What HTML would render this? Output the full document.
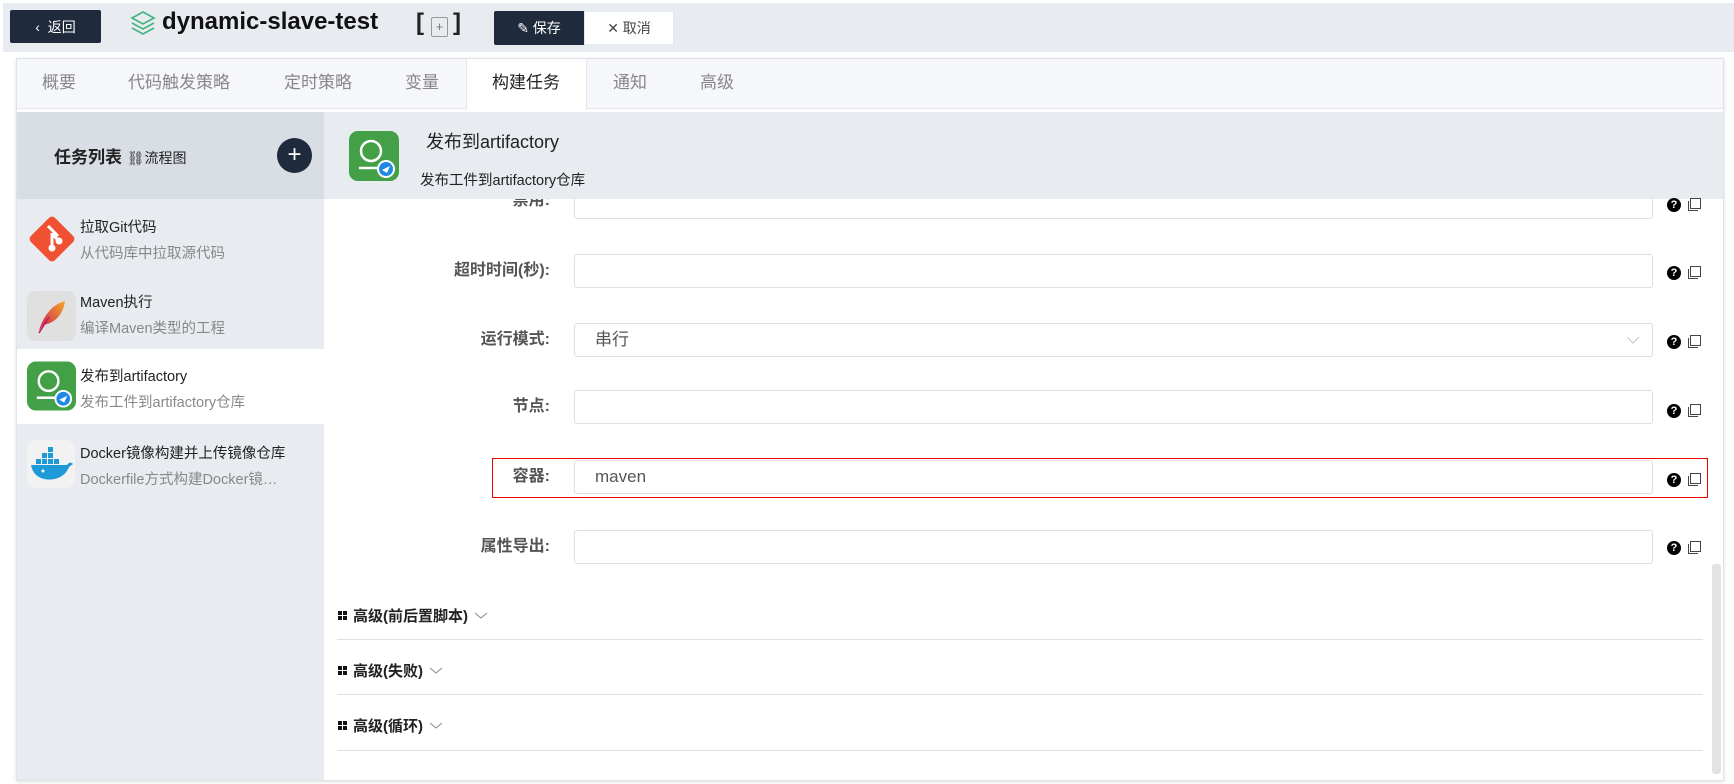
<!DOCTYPE html>
<html><head><meta charset="utf-8"><style>
*{margin:0;padding:0;box-sizing:border-box}
body{width:1734px;height:784px;background:#fff;font-family:"Liberation Sans","Noto Sans CJK SC",sans-serif;position:relative;overflow:hidden;color:#222}
.a{position:absolute}
.hdr{left:3px;top:3px;width:1731px;height:49px;background:#e8ebf0}
.btn{background:#1f2a3c;color:#fff;font-size:14px;display:flex;align-items:center;justify-content:center;border-radius:2px}
.tab{top:58px;height:50px;line-height:50px;font-size:17px;color:#888}
.lbl{width:240px;text-align:right;left:310px;font-size:16px;font-weight:bold;color:#555}
.inp{left:574px;width:1079px;height:34px;border:1px solid #dcdfe6;border-radius:3px;background:#fff;font-size:17px;color:#555;padding-left:20px;line-height:32px}
.help{width:14px;height:14px;border-radius:50%;background:#000;color:#fff;font-size:11px;font-weight:bold;text-align:center;line-height:14px}
.item .t{font-size:14.5px;color:#222}
.item .s{font-size:14.5px;color:#888}
.sec{left:338px;font-size:15px;font-weight:bold;color:#222;display:flex;align-items:center;gap:6px}
.dv{left:337px;width:1366px;height:1px;background:#dcdfe6}
.gr{width:9px;height:9px;display:grid;grid-template-columns:4px 4px;gap:1px}
.gr i{background:#111;display:block}
</style></head><body>
<div class="a hdr"></div>
<div class="a btn" style="left:10px;top:10px;width:91px;height:33px">‹&nbsp; 返回</div>
<svg class="a" style="left:130px;top:10px" width="26" height="28" viewBox="0 0 26 28" fill="none" stroke="#3fb37f" stroke-width="1.6"><path d="M13 2 L24 8 L13 14 L2 8 Z"/><path d="M2 13 L13 19 L24 13"/><path d="M2 18 L13 24 L24 18"/></svg>
<div class="a" style="left:162px;top:8px;font-size:24px;font-weight:bold;color:#111">dynamic-slave-test</div>
<div class="a" style="left:416px;top:9px;font-size:24px;font-weight:bold">[</div>
<div class="a" style="left:431px;top:17px;width:17px;height:20px;border:1px solid #999;border-radius:2px;font-size:13px;color:#777;text-align:center;line-height:18px">+</div>
<div class="a" style="left:453px;top:9px;font-size:24px;font-weight:bold">]</div>
<div class="a btn" style="left:494px;top:11px;width:90px;height:34px;border-radius:2px 0 0 2px">✎ 保存</div>
<div class="a" style="left:584px;top:11px;width:90px;height:34px;background:#fff;border:1px solid #e4e7ed;font-size:14px;color:#444;text-align:center;line-height:32px">✕ 取消</div>

<div class="a" style="left:16px;top:58px;width:1708px;height:723px;border:1px solid #dfe2e8;box-shadow:0 1px 4px rgba(0,0,0,.12);background:#fff"></div>
<div class="a" style="left:17px;top:59px;width:1706px;height:50px;background:#f5f7fa;border-bottom:1px solid #e4e7ed"></div>
<div class="a" style="left:466px;top:59px;width:121px;height:51px;background:#fff;border-left:1px solid #e4e7ed;border-right:1px solid #e4e7ed"></div>
<div class="a tab" style="left:42px">概要</div>
<div class="a tab" style="left:128px">代码触发策略</div>
<div class="a tab" style="left:284px">定时策略</div>
<div class="a tab" style="left:405px">变量</div>
<div class="a tab" style="left:492px;color:#222">构建任务</div>
<div class="a tab" style="left:613px">通知</div>
<div class="a tab" style="left:700px">高级</div>

<div class="a" style="left:17px;top:112px;width:307px;height:668px;background:#e8ebf0"></div>
<div class="a" style="left:17px;top:112px;width:307px;height:87px;background:#d9dde4"></div>
<div class="a" style="left:54px;top:143px;font-size:17px;font-weight:bold">任务列表 <span style="font-size:14px;font-weight:normal">⛓流程图</span></div>
<div class="a" style="left:277px;top:138px;width:35px;height:35px;border-radius:50%;background:#1f2a3c;color:#fff;font-size:24px;text-align:center;line-height:33px">+</div>

<div class="a" style="left:17px;top:349px;width:307px;height:75px;background:#fff"></div>
<div class="a item" style="left:27px;top:208px">
<svg class="a" style="left:0;top:6px" width="50" height="50" viewBox="0 0 50 50"><rect x="8" y="8" width="34" height="34" rx="4" transform="rotate(45 25 25)" fill="#f05133"/><path d="M21 12 L31 22 M25 19 V33 M25 20 L32 27" stroke="#fff" stroke-width="3"/><circle cx="25" cy="34" r="3.5" fill="#fff"/><circle cx="32" cy="27" r="3.5" fill="#fff"/></svg>
<div class="a t" style="left:53px;top:8px;white-space:nowrap">拉取Git代码</div>
<div class="a s" style="left:53px;top:34px;white-space:nowrap">从代码库中拉取源代码</div></div>
<div class="a item" style="left:27px;top:283px">
<svg class="a" style="left:0;top:8px" width="49" height="50" viewBox="0 0 49 50"><defs><linearGradient id="g" x1="0" y1="1" x2="1" y2="0"><stop offset="0" stop-color="#c2185b"/><stop offset="1" stop-color="#f9a825"/></linearGradient></defs><rect width="49" height="50" rx="8" fill="#e0e0e0"/><path d="M12 40 C16 26 24 14 38 10 C36 24 28 32 16 34 Z" fill="url(#g)"/><path d="M12 42 L22 26" stroke="#c2185b" stroke-width="1.5"/></svg>
<div class="a t" style="left:53px;top:8px;white-space:nowrap">Maven执行</div>
<div class="a s" style="left:53px;top:34px;white-space:nowrap">编译Maven类型的工程</div></div>
<div class="a item" style="left:27px;top:357px">
<svg class="a" style="left:0;top:4px" width="49" height="50" viewBox="0 0 50 50"><rect width="50" height="50" rx="9" fill="#43a047"/><circle cx="22" cy="20" r="10" fill="none" stroke="#fff" stroke-width="2.5"/><path d="M10 37 H32" stroke="#fff" stroke-width="2.5"/><circle cx="37" cy="38" r="9" fill="#fff"/><circle cx="37" cy="38" r="7" fill="#1e88e5"/><path d="M33 39 L41 35 L38 42 Z" fill="#fff"/></svg>
<div class="a t" style="left:53px;top:8px;white-space:nowrap">发布到artifactory</div>
<div class="a s" style="left:53px;top:34px;white-space:nowrap">发布工件到artifactory仓库</div></div>
<div class="a item" style="left:27px;top:440px">
<svg class="a" style="left:0;top:0" width="48" height="48" viewBox="0 0 48 48"><rect width="48" height="48" rx="9" fill="#f2f2f2"/><path d="M4 25 H40 C42 22 44 22 46 24 C43 26 42 27 41 29 C36 40 20 42 12 37 C7 34 5 30 4 25 Z" fill="#1e9bd7"/><g fill="#1e9bd7"><rect x="9" y="19" width="5" height="5"/><rect x="15" y="19" width="5" height="5"/><rect x="21" y="19" width="5" height="5"/><rect x="27" y="19" width="5" height="5"/><rect x="15" y="13" width="5" height="5"/><rect x="21" y="13" width="5" height="5"/><rect x="21" y="7" width="5" height="5"/></g><circle cx="16" cy="31" r="1.5" fill="#fff"/></svg>
<div class="a t" style="left:53px;top:2px;white-space:nowrap">Docker镜像构建并上传镜像仓库</div>
<div class="a s" style="left:53px;top:28px;white-space:nowrap">Dockerfile方式构建Docker镜…</div></div>

<div class="a lbl" style="top:256px">超时时间(秒):</div><div class="a inp" style="top:254px"></div>
<div class="a lbl" style="top:325px">运行模式:</div><div class="a inp" style="top:323px">串行<svg class="a" style="right:12px;top:11px" width="14" height="10"><path d="M1 2 L7 8 L13 2" stroke="#c0c4cc" fill="none"/></svg></div>
<div class="a lbl" style="top:392px">节点:</div><div class="a inp" style="top:390px"></div>
<div class="a" style="left:492px;top:458px;width:1216px;height:40px;border:1px solid #e00"></div>
<div class="a lbl" style="top:462px">容器:</div><div class="a inp" style="top:460px">maven</div>
<div class="a lbl" style="top:532px">属性导出:</div><div class="a inp" style="top:530px"></div>

<div class="a" style="left:574px;top:185px;width:1079px;height:34px;border:1px solid #dcdfe6;border-radius:3px"></div>
<div class="a lbl" style="top:186px">禁用:</div>
<div class="a" style="left:324px;top:112px;width:1399px;height:87px;background:#e8ebf0"></div>
<svg class="a" style="left:349px;top:131px" width="50" height="50" viewBox="0 0 50 50"><rect width="50" height="50" rx="9" fill="#43a047"/><circle cx="22" cy="20" r="10" fill="none" stroke="#fff" stroke-width="2.5"/><path d="M10 37 H32" stroke="#fff" stroke-width="2.5"/><circle cx="37" cy="38" r="9" fill="#fff"/><circle cx="37" cy="38" r="7" fill="#1e88e5"/><path d="M33 39 L41 35 L38 42 Z" fill="#fff"/></svg>
<div class="a" style="left:426px;top:128px;font-size:18px">发布到artifactory</div>
<div class="a" style="left:420px;top:169px;font-size:14.5px">发布工件到artifactory仓库</div>

<div class="a help" style="left:1667px;top:198px">?</div>
<div class="a help" style="left:1667px;top:266px">?</div>
<div class="a help" style="left:1667px;top:335px">?</div>
<div class="a help" style="left:1667px;top:404px">?</div>
<div class="a help" style="left:1667px;top:473px">?</div>
<div class="a help" style="left:1667px;top:541px">?</div>
<svg class="a" style="left:1686px;top:198px" width="15" height="14"><rect x="4.5" y="0.5" width="10" height="10" fill="none" stroke="#444"/><path d="M2.5 3 V12.5 H12" fill="none" stroke="#444"/></svg>
<svg class="a" style="left:1686px;top:266px" width="15" height="14"><rect x="4.5" y="0.5" width="10" height="10" fill="none" stroke="#444"/><path d="M2.5 3 V12.5 H12" fill="none" stroke="#444"/></svg>
<svg class="a" style="left:1686px;top:335px" width="15" height="14"><rect x="4.5" y="0.5" width="10" height="10" fill="none" stroke="#444"/><path d="M2.5 3 V12.5 H12" fill="none" stroke="#444"/></svg>
<svg class="a" style="left:1686px;top:404px" width="15" height="14"><rect x="4.5" y="0.5" width="10" height="10" fill="none" stroke="#444"/><path d="M2.5 3 V12.5 H12" fill="none" stroke="#444"/></svg>
<svg class="a" style="left:1686px;top:473px" width="15" height="14"><rect x="4.5" y="0.5" width="10" height="10" fill="none" stroke="#444"/><path d="M2.5 3 V12.5 H12" fill="none" stroke="#444"/></svg>
<svg class="a" style="left:1686px;top:541px" width="15" height="14"><rect x="4.5" y="0.5" width="10" height="10" fill="none" stroke="#444"/><path d="M2.5 3 V12.5 H12" fill="none" stroke="#444"/></svg>

<div class="a sec" style="top:605px"><span class="gr"><i></i><i></i><i></i><i></i></span>高级(前后置脚本)<svg width="14" height="9"><path d="M1 2 L7 7 L13 2" stroke="#888" fill="none"/></svg></div>
<div class="a dv" style="top:639px"></div>
<div class="a sec" style="top:660px"><span class="gr"><i></i><i></i><i></i><i></i></span>高级(失败)<svg width="14" height="9"><path d="M1 2 L7 7 L13 2" stroke="#888" fill="none"/></svg></div>
<div class="a dv" style="top:694px"></div>
<div class="a sec" style="top:715px"><span class="gr"><i></i><i></i><i></i><i></i></span>高级(循环)<svg width="14" height="9"><path d="M1 2 L7 7 L13 2" stroke="#888" fill="none"/></svg></div>
<div class="a dv" style="top:750px"></div>
<div class="a" style="left:1712px;top:564px;width:9px;height:210px;background:#e3e3e3;border-radius:3px"></div>
</body></html>
